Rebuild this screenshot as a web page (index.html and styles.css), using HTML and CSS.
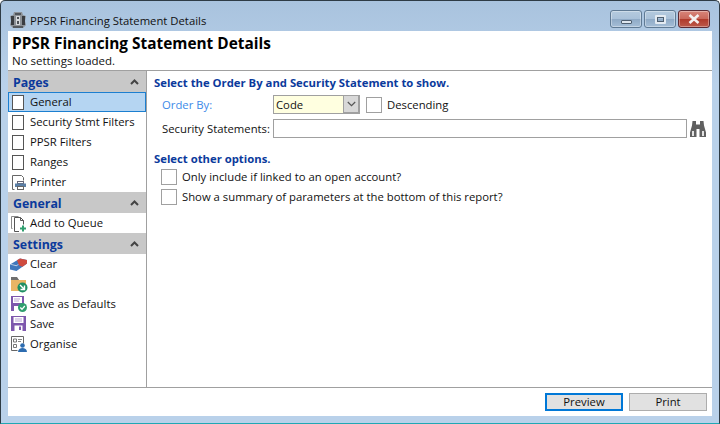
FILE: index.html
```html
<!DOCTYPE html>
<html lang="en">
<head>
<meta charset="utf-8">
<title>PPSR Financing Statement Details</title>
<link rel="stylesheet" href="styles.css">
</head>
<body>
<div class="window">
  <div class="titlebar">
    <svg class="app-icon" width="16" height="16" viewBox="0 0 16 16"><path d="M4 0h8l1 3 3 1-1 5 1 4-3 3H3l-3-3 1-4-1-5 3-1z" fill="#8d9298"/><path d="M1 4h3v9H1zM12 4h3v9h-3z" fill="#3a3d42"/><path d="M5 1h6v2H5z" fill="#50545a"/><path d="M6 4h4v9H6z" fill="#d6d9dc"/><path d="M7 5h2v2H7zM7 9h2v3H7z" fill="#4d5157"/><path d="M3 14h10v2H3z" fill="#55595e"/></svg>
    <span class="title-text">PPSR Financing Statement Details</span>
    <div class="caption">
      <span class="cap-btn"><span class="cap-min"></span></span>
      <span class="cap-btn"><span class="cap-max"></span></span>
      <span class="cap-btn cap-close"><svg width="12" height="10" viewBox="0 0 12 10"><path d="M1.500 1l9 8M10.500 1l-9 8" stroke="#f4f0f0" stroke-width="2.600"/></svg></span>
    </div>
  </div>
  <div class="client">
    <header class="head">
      <h1>PPSR Financing Statement Details</h1>
      <p>No settings loaded.</p>
    </header>
    <div class="body">
      <aside class="side">
        <div class="group"><span>Pages</span><svg class="chev" width="9" height="6" viewBox="0 0 9 6"><path d="M1 5l3.500-3.500L8 5" fill="none" stroke="#444" stroke-width="2"/></svg></div>
        <div class="item active"><span class="ico"><svg width="14" height="16" viewBox="0 0 14 16"><rect x="1.500" y="1.500" width="11" height="14" fill="#fff" stroke="#555"/></svg></span>General</div>
        <div class="item"><span class="ico"><svg width="14" height="16" viewBox="0 0 14 16"><rect x="1.500" y="1.500" width="11" height="14" fill="#fff" stroke="#555"/></svg></span>Security Stmt Filters</div>
        <div class="item"><span class="ico"><svg width="14" height="16" viewBox="0 0 14 16"><rect x="1.500" y="1.500" width="11" height="14" fill="#fff" stroke="#555"/></svg></span>PPSR Filters</div>
        <div class="item"><span class="ico"><svg width="14" height="16" viewBox="0 0 14 16"><rect x="1.500" y="1.500" width="11" height="14" fill="#fff" stroke="#555"/></svg></span>Ranges</div>
        <div class="item"><span class="ico"><svg width="16" height="16" viewBox="0 0 16 16"><path d="M3.500 15.500h-2v-14h9l2 2v3" fill="#fff" stroke="#666"/><rect x="6.500" y="7.500" width="6" height="2" fill="#fff" stroke="#667"/><rect x="4" y="9.500" width="11" height="3.500" fill="#5b7fa6"/><rect x="6.500" y="12.500" width="6" height="3" fill="#fff" stroke="#666"/></svg></span>Printer</div>
        <div class="group"><span>General</span><svg class="chev" width="9" height="6" viewBox="0 0 9 6"><path d="M1 5l3.500-3.500L8 5" fill="none" stroke="#444" stroke-width="2"/></svg></div>
        <div class="item"><span class="ico ico-wide"><svg width="17" height="17" viewBox="0 0 17 17"><path d="M2.500 13.500h-1v-12h7" fill="none" stroke="#888"/><path d="M9 16.500H4.500v-14h6l3 3v4" fill="#fff" stroke="#555"/><path d="M10.500 2.500v3h3" fill="none" stroke="#555"/><path d="M10 13.500h6M13 10.500v6" stroke="#2f9e6e" stroke-width="2"/></svg></span>Add to Queue</div>
        <div class="group"><span>Settings</span><svg class="chev" width="9" height="6" viewBox="0 0 9 6"><path d="M1 5l3.500-3.500L8 5" fill="none" stroke="#444" stroke-width="2"/></svg></div>
        <div class="item"><span class="ico ico-wide"><svg width="17" height="13" viewBox="0 0 17 13"><path d="M0 6.500L10 .5 17 2v3.500L6.500 13 0 11.500z" fill="#3f77bb"/><path d="M7 2.300L10 .5 17 2v3.500L12.500 8.700 9 7.500z" fill="#cf4b3f"/><path d="M0 6.500l1-.6 5.500 1.300 1.500-1 .8.300-2.300 1.800z" fill="#c4d4e6"/></svg></span>Clear</div>
        <div class="item"><span class="ico ico-wide"><svg width="18" height="17" viewBox="0 0 18 17"><path d="M1 2h6l2 2h7v11H1z" fill="#e9b565"/><path d="M1 1h6l2 3H1z" fill="#6f6f6f"/><circle cx="12.500" cy="11.500" r="5" fill="#1f8f63"/><path d="M10 9l4 4M14.500 9.500V13.500h-4" fill="none" stroke="#fff" stroke-width="1.400"/></svg></span>Load</div>
        <div class="item"><span class="ico"><svg width="16" height="16" viewBox="0 0 16 16"><path d="M0 0h13v15H0z" fill="#7e57ad"/><rect x="2" y="1" width="9" height="6" fill="#fff"/><path d="M3 3h6M3 5h5" stroke="#b9a5d3"/><rect x="3" y="10" width="6" height="5" fill="#fff"/><circle cx="11.500" cy="11.500" r="4.500" fill="#2f9e6e"/><path d="M9.300 11.500L11 13.300l2.800-3.300" fill="none" stroke="#fff" stroke-width="1.300"/></svg></span>Save as Defaults</div>
        <div class="item"><span class="ico"><svg width="16" height="16" viewBox="0 0 16 16"><path d="M0 0h15v15H0z" fill="#7e57ad"/><rect x="2.500" y="1" width="10" height="6" fill="#fff"/><path d="M4 3h7M4 5h7" stroke="#b9a5d3"/><rect x="3.500" y="9.500" width="8" height="5.500" fill="#fff"/><rect x="8" y="10.500" width="2" height="3.500" fill="#7e57ad"/></svg></span>Save</div>
        <div class="item"><span class="ico"><svg width="16" height="16" viewBox="0 0 16 16"><path d="M.5 14.500V.5h12v7" fill="#fff" stroke="#666"/><path d="M.5 14.500h6" stroke="#666"/><path d="M2.500 3h3v3h-3zM2.500 8.500h3v3h-3z" fill="none" stroke="#777"/><path d="M7 3.500h4M7 5.500h3" stroke="#888"/><circle cx="11.500" cy="9.500" r="2.300" fill="#2d6cb0"/><path d="M7 16c0-5.500 9-5.500 9 0z" fill="#2d6cb0"/></svg></span>Organise</div>
      </aside>
      <main class="form">
        <h2>Select the Order By and Security Statement to show.</h2>
        <div class="row row-order">
          <label class="lbl lbl-link">Order By:</label>
          <div class="combo"><span class="combo-val">Code</span><span class="combo-btn"><svg width="9" height="6" viewBox="0 0 9 6"><path d="M.8 1l3.700 3.700L8.200 1" fill="none" stroke="#555" stroke-width="1.200"/></svg></span></div>
          <span class="check"></span><span class="check-text">Descending</span>
        </div>
        <div class="row row-sec">
          <label class="lbl">Security Statements:</label>
          <div class="input"></div>
          <svg class="find" width="16" height="16" viewBox="0 0 16 16"><path d="M2.500 0h3.500v3.500h4V0h3.500l.5 4.500 2 7V16H9.500V8h-3v8H0v-4.500l2-7z" fill="#606060"/><path d="M2 10h2v5H2zM12 10h2v5h-2z" fill="#e2e2e2"/></svg>
        </div>
        <h2 class="h2-other">Select other options.</h2>
        <div class="opt"><span class="check"></span><span class="check-text">Only include if linked to an open account?</span></div>
        <div class="opt"><span class="check"></span><span class="check-text">Show a summary of parameters at the bottom of this report?</span></div>
      </main>
    </div>
    <footer class="foot">
      <button class="btn btn-default">Preview</button>
      <button class="btn">Print</button>
    </footer>
  </div>
</div>
</body>
</html>
```
FILE: styles.css
```css
* { box-sizing: border-box; }
html, body { margin: 0; padding: 0; }
body { width: 720px; height: 424px; overflow: hidden; background: #fff; font-family: "Open Sans", "Noto Sans", sans-serif; font-size: 11.3px; color: #111; }
.window { width: 720px; height: 424px; display: flex; flex-direction: column; padding: 0 8px 7px; background: linear-gradient(#a9c3de, #b9d1ea 20%, #b9d1ea); border: 1px solid #2e3b45; border-bottom-color: #1fa8b4; border-radius: 5px 5px 0 0; }
.titlebar { height: 30px; margin: 0 -1px; flex: none; display: flex; align-items: center; padding-top: 8px; }
.app-icon { margin-left: 2px; flex: none; }
.title-text { margin-left: 4px; font-size: 11.3px; color: #111; }
.caption { margin-left: auto; margin-right: 2px; margin-top: -2px; display: flex; gap: 2px; }
.cap-btn { width: 32px; height: 18px; border: 1px solid #5f7a94; border-radius: 3px; background: linear-gradient(#b4cade 0, #a9c1d9 50%, #8faac6 52%, #a5bed7); display: flex; align-items: center; justify-content: center; box-shadow: inset 0 0 0 1px rgba(255,255,255,.35); }
.cap-min { width: 11px; height: 4px; margin-top: 5px; background: #dfe7ef; border: 1px solid #4f5f70; border-radius: 1px; }
.cap-max { width: 11px; height: 9px; background: transparent; border: 2px solid #e4ebf2; outline: 1px solid #4f5f70; outline-offset: -3px; border-radius: 1px; }
.cap-close { background: linear-gradient(#d8857a 0, #c9675a 50%, #b03a2b 52%, #bd5a4b); border-color: #5c2a33; }
.client { flex: 1; margin: 0 -1px; background: #fff; display: flex; flex-direction: column; min-height: 0; }
.head { height: 40px; flex: none; padding: 4px 0 0 4px; border-bottom: 1px solid #a0a0a0; }
.head h1 { margin: 0; font-size: 15.4px; line-height: 18px; font-weight: 700; color: #000; }
.head p { margin: 0; padding-top: 1px; font-size: 11.5px; line-height: 14px; color: #111; }
.body { flex: 1; display: flex; min-height: 0; }
.side { width: 139px; flex: none; border-right: 1px solid #a0a0a0; }
.group { height: 21px; padding: 1px 8px 0 5px; background: #c8c8c8; display: flex; align-items: center; justify-content: space-between; font-size: 12.4px; font-weight: 700; color: #0b3a9c; }
.chev { margin-right: -1px; }
.item { height: 20px; padding-bottom: 2px; display: flex; align-items: center; color: #111; white-space: nowrap; }
.ico { width: 22px; padding-left: 3px; margin-top: 2px; flex: none; display: flex; align-items: center; justify-content: flex-start; }
.ico-wide { padding-left: 2px; }
.item.active { background: #b5d5f2; outline: 1px solid #1c7fd0; outline-offset: -1px; }
.form { flex: 1; padding: 3px 0 0 7px; }
.form h2 { margin: 0; font-size: 11.3px; line-height: 17px; font-weight: 700; color: #0b3a9c; }
.form .h2-other { margin-top: 12px; }
.row { display: flex; align-items: center; }
.row-order { margin-top: 4px; height: 19px; }
.row-sec { margin-top: 5px; height: 19px; }
.lbl { width: 119px; padding-left: 8px; flex: none; white-space: nowrap; color: #111; }
.lbl-link { color: #3d8ae8; }
.combo { width: 87px; height: 19px; flex: none; display: flex; background: #ffffe0; border: 1px solid #a0a0a0; }
.combo-val { flex: 1; padding-left: 2px; line-height: 17px; }
.combo-btn { width: 16px; background: #d8d8d8; display: flex; align-items: center; justify-content: center; border: 1px solid #a0a0a0; border-width: 0 1px 1px 1px; }
.check { width: 16px; height: 16px; flex: none; background: #fff; border: 1px solid #a0a0a0; }
.row-order .check { margin-left: 6px; }
.check-text { margin-left: 5px; white-space: nowrap; }
.input { width: 414px; height: 19px; flex: none; background: #fff; border: 1px solid #a0a0a0; }
.find { margin-left: 3px; flex: none; }
.opt { height: 20px; display: flex; align-items: center; padding-left: 7px; }
.opt .check-text { padding-bottom: 2px; }
.foot { height: 29px; flex: none; border-top: 1px solid #a0a0a0; display: flex; align-items: flex-start; justify-content: flex-end; gap: 6px; padding: 5px 5px 0 0; }
.btn { width: 78px; height: 18px; padding: 0; background: #e1e1e1; border: 1px solid #adadad; font: inherit; font-size: 11.3px; color: #111; line-height: 14px; }
.btn-default { border: 2px solid #0078d7; }
```
